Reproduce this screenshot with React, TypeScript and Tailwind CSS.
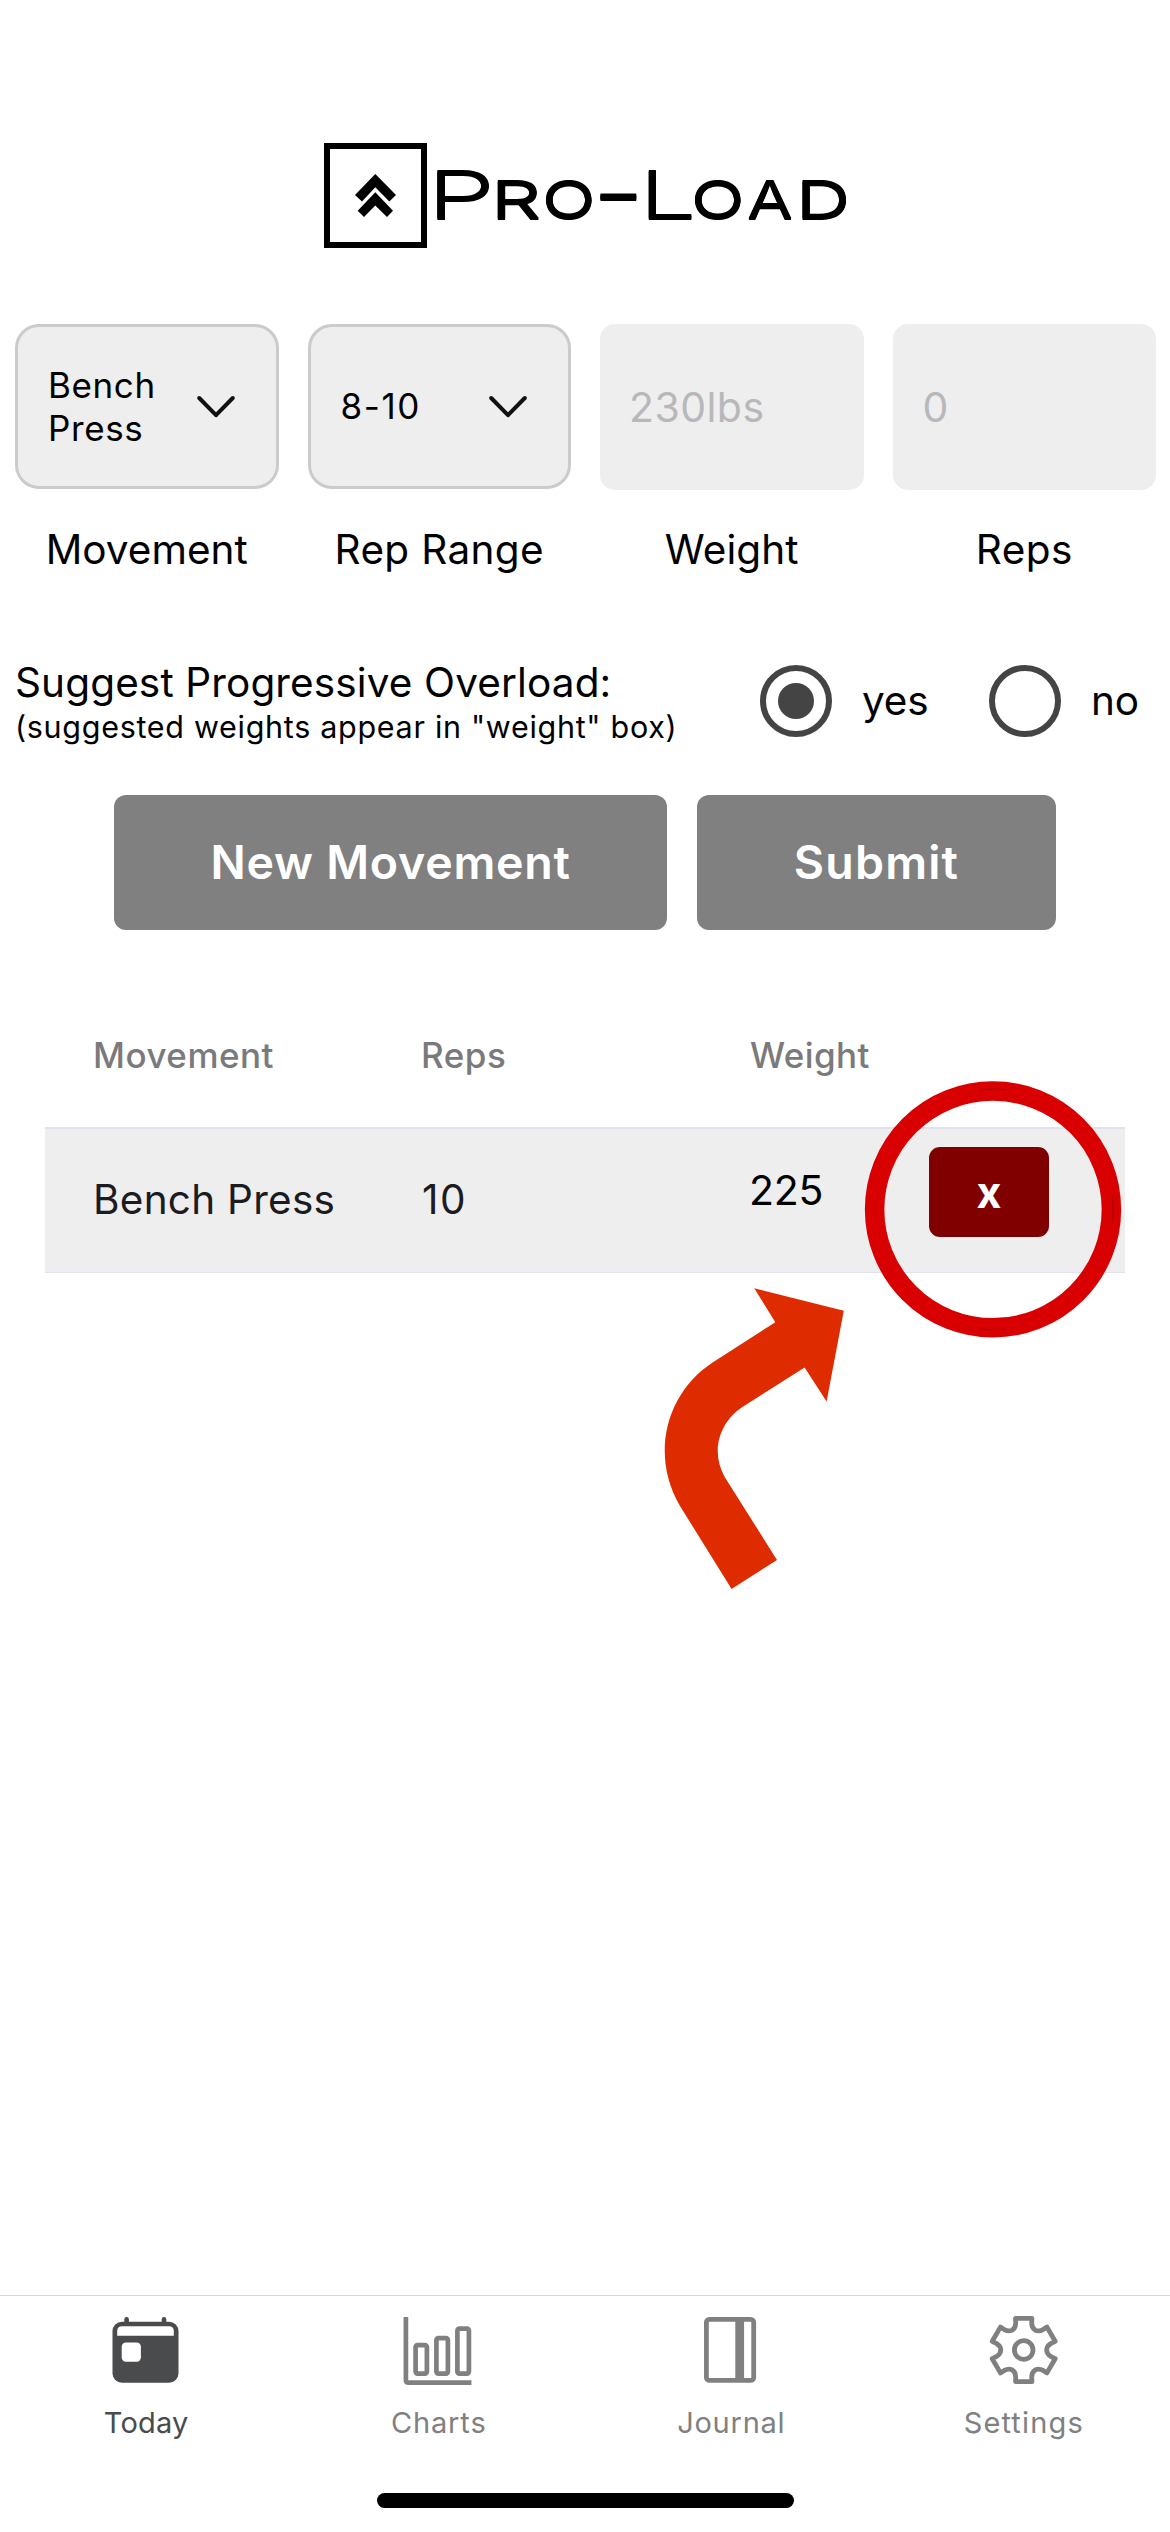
import React from "react";

/* Wordmark letters: slot width, horizontal stretch, size and weight of each one. */
const letters = [
  { ch: "P", slot: "w-[64px]", glyph: "text-[65.5px] font-light scale-x-[1.66]" },
  { ch: "R", slot: "w-[51px]", glyph: "text-[52px] font-normal scale-x-[1.5]" },
  { ch: "O", slot: "w-[51px]", glyph: "text-[52px] font-normal scale-x-[1.35]" },
  { ch: "-", slot: "w-[46px]", glyph: "text-[52px] font-semibold scale-x-[2.1] -translate-y-[6px]" },
  { ch: "L", slot: "w-[52px]", glyph: "text-[65.5px] font-light scale-x-[1.56]" },
  { ch: "O", slot: "w-[56px]", glyph: "text-[52px] font-normal scale-x-[1.35]" },
  { ch: "A", slot: "w-[49px]", glyph: "text-[52px] font-normal scale-x-[1.28]" },
  { ch: "D", slot: "w-[58px]", glyph: "text-[52px] font-normal scale-x-[1.45]" },
];

function Logo() {
  return (
    <div className="flex h-[105px]">
      <svg className="h-[105px] w-[103px] shrink-0" viewBox="0 0 103 105">
        <rect x="3" y="3" width="97" height="99" fill="white" stroke="black" strokeWidth="6" />
        <path
          d="M51.3 31 L72 52 L65.3 58.5 L51.3 44.3 L38 58.5 L31 52 Z M51.3 49.3 L69 67.7 L63 74 L51.3 62.5 L40 74 L33.7 67.7 Z"
          fill="black"
        />
      </svg>
      <h1 className="flex items-baseline leading-[105px] [text-shadow:0_1.2px_0_black,0_-1.2px_0_black]">
        {letters.map((l, i) => (
          <span key={i} className={l.slot}>
            <span className={`inline-block origin-left ${l.glyph}`}>{l.ch}</span>
          </span>
        ))}
      </h1>
    </div>
  );
}

function Chevron() {
  return (
    <svg className="h-[24px] w-[40px] shrink-0" viewBox="0 0 40 24" fill="none">
      <path d="M3.2 3 L20 20.2 L36.8 3" stroke="#111111" strokeWidth="4" strokeLinecap="round" strokeLinejoin="round" />
    </svg>
  );
}

function Select({ children }: { children: React.ReactNode }) {
  return (
    <div className="flex h-[165px] items-center justify-between rounded-[24px] border-[3px] border-[#cbcbcb] bg-[#eeeeee] pr-[40px] pl-[30px] text-[35px] leading-[43px]">
      {children}
      <Chevron />
    </div>
  );
}

function Field({ label, tracking, children }: { label: string; tracking: string; children: React.ReactNode }) {
  return (
    <div>
      <div className="h-[166px]">{children}</div>
      <div className={`mt-[35px] text-center text-[40.5px] leading-[49px] whitespace-nowrap ${tracking}`}>{label}</div>
    </div>
  );
}

function Radio({ on }: { on?: boolean }) {
  return (
    <span className="flex size-[72px] shrink-0 items-center justify-center rounded-full border-[6px] border-[#444444]">
      {on && <span className="size-[36px] rounded-full bg-[#444444]" />}
    </span>
  );
}

function CalendarIcon() {
  return (
    <svg className="size-[76px]" viewBox="0 0 76 76" fill="#4a4b4d">
      <path d="M18.6 5.2 V12 M56 5.2 V12" stroke="#4a4b4d" strokeWidth="4.6" strokeLinecap="round" />
      <rect x="4.5" y="7.7" width="66" height="61" rx="9.5" />
      <path d="M9.2 21.7 V17 Q9.2 12.3 14 12.3 H61 Q65.8 12.3 65.8 17 V21.7 Z" fill="white" />
      <rect x="13.7" y="28.5" width="19.2" height="19.3" rx="4.2" fill="white" />
    </svg>
  );
}

function ChartsIcon() {
  return (
    <svg className="size-[76px]" viewBox="0 0 76 76" fill="none" stroke="#808080" strokeWidth="4.7">
      <path d="M4.9 3 V66 Q4.9 68.6 7.5 68.6 H70.4" />
      <rect x="14.6" y="31.1" width="11.3" height="28.5" rx="2" />
      <rect x="35.4" y="24.1" width="11.5" height="35.5" rx="2" />
      <rect x="56.4" y="14.7" width="11.5" height="44.9" rx="2" />
    </svg>
  );
}

function JournalIcon() {
  return (
    <svg className="size-[76px]" viewBox="0 0 76 76" fill="none" stroke="#808080">
      <rect x="13.4" y="5.4" width="47.3" height="61" rx="3" strokeWidth="4.8" />
      <path d="M46.7 5 V67" strokeWidth="8.8" />
    </svg>
  );
}

function SettingsIcon() {
  const tooth: number[][] = [[8.2, -31.6], [8, -27], [8, -23.4], [9.2, -21.4], [11.4, -19.9]];
  const rot = (p: number[], deg: number) => {
    const a = (deg * Math.PI) / 180;
    return `${(p[0] * Math.cos(a) - p[1] * Math.sin(a)).toFixed(2)} ${(p[0] * Math.sin(a) + p[1] * Math.cos(a)).toFixed(2)}`;
  };
  const mirror = (p: number[]) => [-p[0], p[1]];
  const d = [0, 60, 120, 180, 240, 300]
    .map((deg, i) => {
      const [c, s, h1, h2, v] = tooth;
      return (
        `${i === 0 ? "M" : "L"}${rot(mirror(v), deg)} C${rot(mirror(h2), deg)} ${rot(mirror(h1), deg)} ${rot(mirror(s), deg)} ` +
        `L${rot(mirror(c), deg)} L${rot(c, deg)} L${rot(s, deg)} C${rot(h1, deg)} ${rot(h2, deg)} ${rot(v, deg)}`
      );
    })
    .join(" ");
  return (
    <svg className="size-[76px]" viewBox="0 0 76 76" fill="none" stroke="#808080" strokeWidth="4.8" strokeLinejoin="round">
      <g transform="translate(37.7 36)">
        <path d={`${d} Z`} />
        <circle r="9.3" />
      </g>
    </svg>
  );
}

const tabs = [
  { label: "Today", icon: <CalendarIcon />, style: "text-[#4a4b4d] tracking-[0.2px]" },
  { label: "Charts", icon: <ChartsIcon />, style: "text-[#808080] tracking-[0.85px]" },
  { label: "Journal", icon: <JournalIcon />, style: "text-[#808080] tracking-[0.75px]" },
  { label: "Settings", icon: <SettingsIcon />, style: "text-[#808080] tracking-[1.15px]" },
];

export default function App() {
  return (
    <div className="flex h-[2532px] w-[1170px] flex-col overflow-hidden bg-white font-[Inter,sans-serif] text-black">
      <header className="pt-[143px] pl-[324px]">
        <Logo />
      </header>

      <section className="mt-[76px] grid grid-cols-4 gap-[29px] pr-[14px] pl-[15px]">
        <Field label="Movement" tracking="tracking-normal">
          <Select>
            <span className="tracking-[0.6px]">
              Bench
              <br />
              Press
            </span>
          </Select>
        </Field>
        <Field label="Rep Range" tracking="tracking-[0.34px]">
          <Select>
            <span className="tracking-[1.6px]">8-10</span>
          </Select>
        </Field>
        <Field label="Weight" tracking="tracking-[0.11px]">
          <div className="flex h-[166px] items-center rounded-[15px] bg-[#eeeeee] pt-[2px] pl-[29px] text-[41px] tracking-[0.43px] text-[#b8b8bb]">230lbs</div>
        </Field>
        <Field label="Reps" tracking="tracking-[0.44px]">
          <div className="flex h-[166px] items-center rounded-[15px] bg-[#eeeeee] pt-[2px] pl-[30px] text-[41px] text-[#b8b8bb]">0</div>
        </Field>
      </section>

      <section className="mt-[83px] flex h-[88px] items-center px-[15px]">
        <div className="w-[745px] whitespace-nowrap">
          <div className="text-[40.5px] leading-[51px] tracking-[0.13px]">Suggest Progressive Overload:</div>
          <div className="text-[30.5px] leading-[38px] tracking-[0.7px]">(suggested weights appear in "weight" box)</div>
        </div>
        <label className="flex w-[229px] items-center gap-[30px] text-[40.5px] tracking-[-0.2px]">
          <Radio on />
          yes
        </label>
        <label className="flex items-center gap-[30px] text-[40.5px] tracking-[-0.2px]">
          <Radio />
          no
        </label>
      </section>

      <section className="mt-[50px] flex justify-center gap-[30px] text-[46.5px] font-semibold text-white">
        <button className="h-[135px] w-[553px] rounded-[12px] bg-[#808080] tracking-[0.73px]">New Movement</button>
        <button className="h-[135px] w-[359px] rounded-[12px] bg-[#808080] tracking-[1.2px]">Submit</button>
      </section>

      <section className="relative mx-[45px] mt-[53px]">
        <div className="grid h-[144px] grid-cols-3 items-center px-[48px] text-[35px] font-medium text-[#7a7a7c]">
          <span className="tracking-[0.5px]">Movement</span>
          <span className="tracking-[0.5px]">Reps</span>
          <span className="pl-[1px] tracking-[0.4px]">Weight</span>
        </div>
        <div className="grid h-[146px] grid-cols-3 border-t-2 border-b border-[#e5e0ec] bg-[#eeeeee] px-[48px] text-[40.5px] text-[#1c1b1f]">
          <span className="self-center pb-[1px] tracking-[0.26px]">Bench Press</span>
          <span className="self-center pb-[1px] pl-[1px] tracking-[1.5px]">10</span>
          <div className="flex items-start pt-[18px]">
            <span className="w-[180px] text-[41px] leading-[87px] tracking-[-0.3px] text-black">225</span>
            <button className="h-[90px] w-[120px] rounded-[11px] bg-[#800000] text-[43px] font-bold text-white">x</button>
          </div>
        </div>

        <svg className="absolute top-[97px] left-[615px] h-[510px] w-[465px]" viewBox="660 1080 465 510">
          <circle cx="993" cy="1209.4" r="118.4" fill="none" stroke="#d80000" strokeWidth="19.5" />
          <path d="M979 1089.6 Q993 1088.8 1007 1089.6 M979 1329.3 Q993 1330 1007 1329.3 M1112.7 1196 Q1113.3 1209 1112.7 1222" fill="none" stroke="#8a0000" strokeWidth="0.8" />
          <path
            d="M843.8 1310.8 L754.3 1288.2 L775.3 1322.3 L712.6 1362.5 C666 1393 650 1455 680 1506 L731.6 1589 L777 1560 L724.7 1477 C710 1451 720 1422 742 1407.3 L804.6 1367.5 L826.6 1401.5 Z"
            fill="#de2c00"
          />
        </svg>
      </section>

      <nav className="mt-auto h-[237px] border-t border-[#d6d6d6] pt-[18px]">
        <div className="grid grid-cols-4">
          {tabs.map((t) => (
            <div key={t.label} className="flex flex-col items-center">
              {t.icon}
              <span className={`mt-[13px] text-[29px] leading-[40px] ${t.style}`}>{t.label}</span>
            </div>
          ))}
        </div>
        <div className="mx-auto mt-[50px] h-[15px] w-[417px] rounded-full bg-black" />
      </nav>
    </div>
  );
}
